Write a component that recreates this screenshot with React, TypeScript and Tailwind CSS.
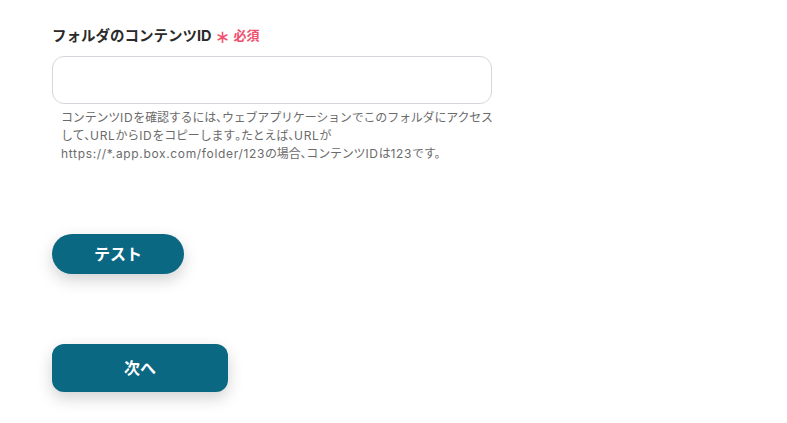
function P({ c }: { c: string }) {
  return <span className="[font-feature-settings:'palt']">{c}</span>;
}

function L({ c }: { c: string }) {
  return <span className="tracking-[0.055em]">{c}</span>;
}

export default function App() {
  return (
    <div
      className="w-[787px] h-[423px] bg-white pl-[52px] pt-[26px]"
      style={{ fontFamily: 'Inter, "Noto Sans CJK JP", sans-serif' }}
    >
      <div className="flex items-center h-[20px] text-[14.5px] font-bold text-[#2a2a2a]">
        <span>フォルダのコンテンツID</span>
        <span className="text-[#f0506e] text-[18px] font-normal ml-[3px] mr-[4px]">∗</span>
        <span className="text-[#f0506e] text-[13px]">必須</span>
      </div>
      <input
        type="text"
        className="mt-[10px] block w-[440px] h-[48px] rounded-[12px] border border-[#d3d7dc] bg-white outline-none"
      />
      <p className="mt-[5px] pl-[9px] w-[460px] whitespace-nowrap text-[12px] leading-[18px] tracking-[-0.015em] text-[#6b6b6b]">
        コンテンツ<L c="ID" />を確認するには<P c="、" />ウェブアプリケーションでこのフォルダにアクセス
        <br />
        して<P c="、" /><L c="URL" />から<L c="ID" />をコピーします<P c="。" />たとえば<P c="、" /><L c="URL" />が
        <br />
        <L c="https://*.app.box.com/folder/123" />の場合<P c="、" />コンテンツ<L c="ID" />は<L c="123" />です。
      </p>
      <button className="mt-[71px] block w-[132px] h-[40px] rounded-full bg-[#0b6882] text-white text-[16px] font-bold shadow-[0_6px_16px_rgba(0,0,0,0.18)]">
        テスト
      </button>
      <button className="mt-[70px] block w-[176px] h-[48px] rounded-[12px] bg-[#0b6882] text-white text-[16px] font-bold shadow-[0_6px_16px_rgba(0,0,0,0.18)]">
        次へ
      </button>
    </div>
  );
}
